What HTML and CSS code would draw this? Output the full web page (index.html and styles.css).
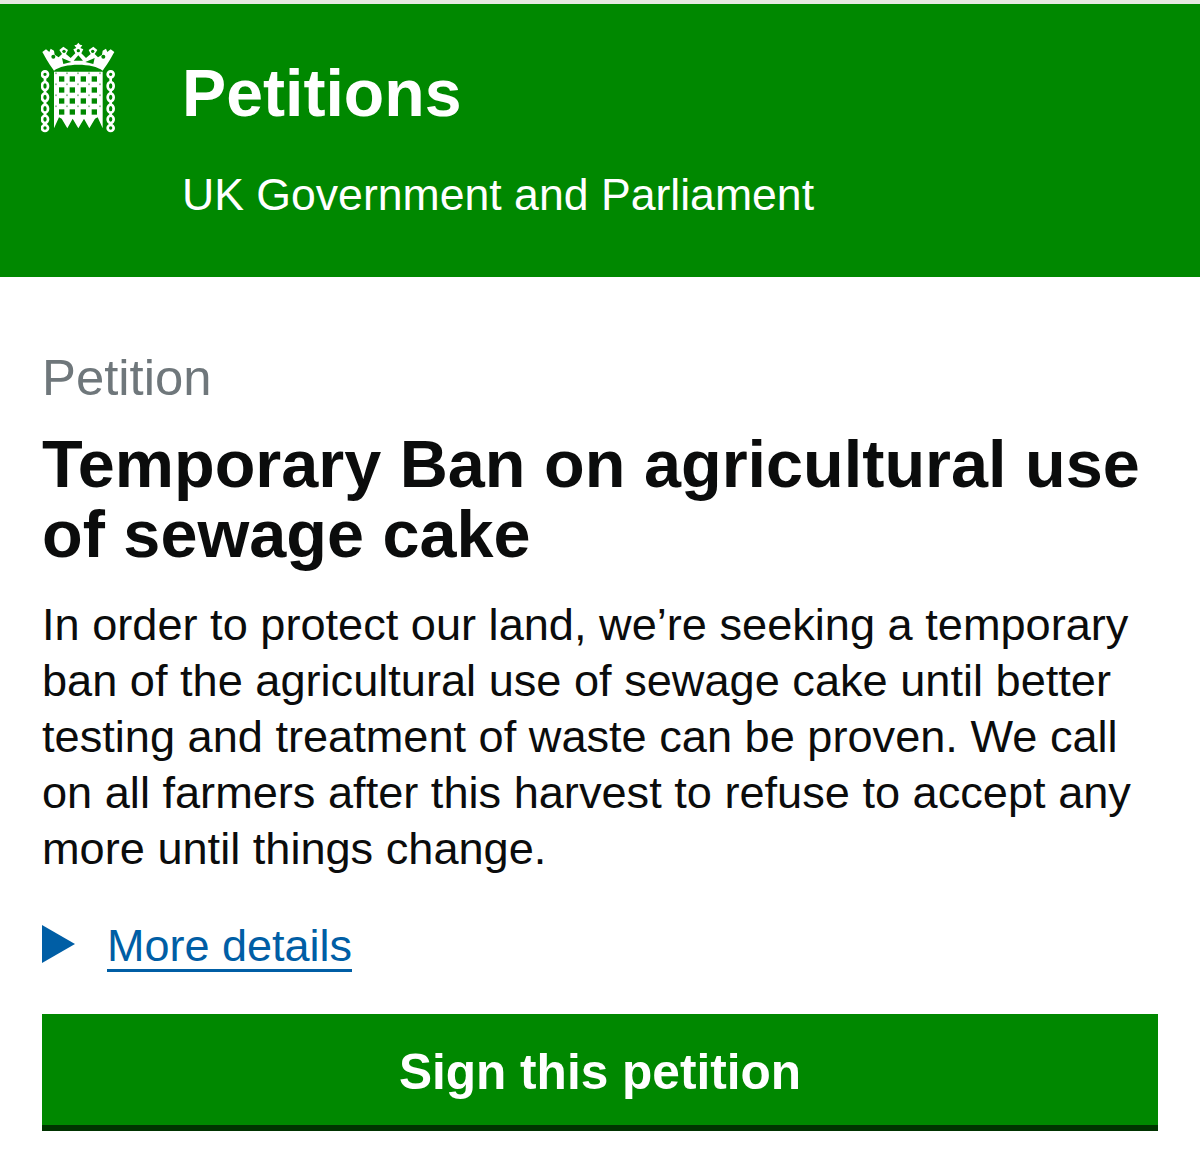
FILE: index.html
```html
<!DOCTYPE html>
<html lang="en">
<head>
<meta charset="utf-8">
<title>Petitions</title>
<link rel="stylesheet" href="styles.css">
</head>
<body>
<header class="site-header">
  <svg class="crest" viewBox="33 33 228 276" width="76" height="92" aria-hidden="true">
    <path fill="#fff" d="M72 122 C60 105 50 90 37 66 L48 58 L58 66 L62 56 L72 62 L74 74 L86 82 L96 72 L88 60 L100 50 L114 60 L108 72 L122 84 L136 70 L130 58 L139 54 L133 46 L140 44 L145 38 L150 44 L157 46 L151 54 L160 58 L154 70 L168 84 L182 72 L176 60 L190 50 L202 60 L194 72 L204 82 L216 74 L218 62 L228 56 L232 66 L242 58 L253 66 C240 90 230 105 218 122 C190 98 100 98 72 122 Z"/>
    <g fill="#008800">
      <circle cx="70" cy="80" r="6"/><circle cx="102" cy="64" r="5"/><circle cx="145" cy="62" r="5"/><circle cx="188" cy="64" r="5"/><circle cx="220" cy="80" r="6"/>
      <path d="M96 84 L124 96 L100 102 Z M194 84 L166 96 L190 102 Z M131 92 L145 76 L159 92 Z"/>
    </g>
    <path fill="#fff" d="M72 125 H218 V295 L203 262 L195 266 L178 295 L162 266 L145 295 L128 266 L112 295 L95 266 L87 262 L72 295 Z"/>
    <g fill="#008800">
      <rect x="87" y="139" width="16" height="16"/><rect x="119" y="139" width="16" height="16"/><rect x="152" y="139" width="16" height="16"/><rect x="185" y="139" width="16" height="16"/>
      <rect x="87" y="172" width="16" height="16"/><rect x="119" y="172" width="16" height="16"/><rect x="152" y="172" width="16" height="16"/><rect x="185" y="172" width="16" height="16"/>
      <rect x="87" y="205" width="16" height="16"/><rect x="119" y="205" width="16" height="16"/><rect x="152" y="205" width="16" height="16"/><rect x="185" y="205" width="16" height="16"/>
      <rect x="87" y="238" width="16" height="16"/><rect x="119" y="238" width="16" height="16"/><rect x="152" y="238" width="16" height="16"/><rect x="185" y="238" width="16" height="16"/>
    </g>
    <g fill="#8dc08d">
      <circle cx="78" cy="130" r="3"/><circle cx="111" cy="130" r="3"/><circle cx="144" cy="130" r="3"/><circle cx="177" cy="130" r="3"/><circle cx="210" cy="130" r="3"/>
      <circle cx="78" cy="163" r="3"/><circle cx="111" cy="163" r="3"/><circle cx="144" cy="163" r="3"/><circle cx="177" cy="163" r="3"/><circle cx="210" cy="163" r="3"/>
      <circle cx="78" cy="196" r="3"/><circle cx="111" cy="196" r="3"/><circle cx="144" cy="196" r="3"/><circle cx="177" cy="196" r="3"/><circle cx="210" cy="196" r="3"/>
      <circle cx="78" cy="229" r="3"/><circle cx="111" cy="229" r="3"/><circle cx="144" cy="229" r="3"/><circle cx="177" cy="229" r="3"/><circle cx="210" cy="229" r="3"/>
    </g>
    <g fill="none" stroke="#fff" stroke-width="8">
      <circle cx="45" cy="133" r="9"/><ellipse cx="45" cy="168" rx="9" ry="12"/><ellipse cx="45" cy="202" rx="9" ry="12"/><ellipse cx="45" cy="236" rx="9" ry="12"/><ellipse cx="45" cy="268" rx="9" ry="11"/><circle cx="45" cy="294" r="9"/>
      <circle cx="242" cy="133" r="9"/><ellipse cx="242" cy="168" rx="9" ry="12"/><ellipse cx="242" cy="202" rx="9" ry="12"/><ellipse cx="242" cy="236" rx="9" ry="12"/><ellipse cx="242" cy="268" rx="9" ry="11"/><circle cx="242" cy="294" r="9"/>
      <path d="M45 141 V156 M45 180 V190 M45 214 V224 M45 248 V257 M45 279 V286 M242 141 V156 M242 180 V190 M242 214 V224 M242 248 V257 M242 279 V286"/>
    </g>
  </svg>
  <div class="brand">
    <div class="brand-title">Petitions</div>
    <div class="brand-sub">UK Government and Parliament</div>
  </div>
</header>
<main class="content">
  <div class="eyebrow">Petition</div>
  <h1 class="title">Temporary Ban on agricultural use of sewage cake</h1>
  <p class="summary">In order to protect our land, we’re seeking a temporary ban of the agricultural use of sewage cake until better testing and treatment of waste can be proven. We call on all farmers after this harvest to refuse to accept any more until things change.</p>
  <div class="details">
    <span class="arrow"></span>
    <a class="details-link" href="#">More details</a>
  </div>
  <a class="sign" href="#">Sign this petition</a>
</main>
</body>
</html>
```
FILE: styles.css
```css
* { box-sizing: border-box; }
html, body { margin: 0; padding: 0; }
body {
  background: #fff;
  border-top: 4px solid #e6e9e2;
  font-family: "Liberation Sans", Arial, sans-serif;
  color: #0b0c0c;
  height: 1168px;
  overflow: hidden;
}
.site-header {
  background: #008800;
  height: 273px;
  display: flex;
  align-items: flex-start;
  padding: 37px 0 0 41px;
  color: #fff;
}
.crest { flex: none; }
.brand { margin-left: 65px; }
.brand-title { font-size: 66.2px; font-weight: 700; line-height: 76px; margin-top: 14px; }
.brand-sub { font-size: 44.6px; line-height: 52px; margin-top: 38px; }
.content { padding: 73px 42px 0; }
.eyebrow { font-size: 50.8px; line-height: 56px; color: #6f777b; }
.title { font-size: 66.6px; line-height: 70px; font-weight: 700; margin: 23px 0 0; }
.summary { font-size: 45.15px; line-height: 56px; margin: 28px 0 0; }
.details { display: flex; align-items: center; margin-top: 42px; height: 56px; }
.arrow {
  width: 0; height: 0;
  border-left: 33px solid #005ea5;
  border-top: 19px solid transparent;
  border-bottom: 19px solid transparent;
  margin: 0 32px 6px 0;
}
.details-link {
  font-size: 45px; line-height: 46px; color: #005ea5;
  text-decoration: none; border-bottom: 3px solid #005ea5;
}
.sign {
  display: block;
  margin-top: 39px;
  height: 117px;
  background: #008800;
  border-bottom: 6px solid #003300;
  color: #fff;
  font-size: 49.6px;
  font-weight: 700;
  line-height: 116px;
  text-align: center;
  text-decoration: none;
}
```
